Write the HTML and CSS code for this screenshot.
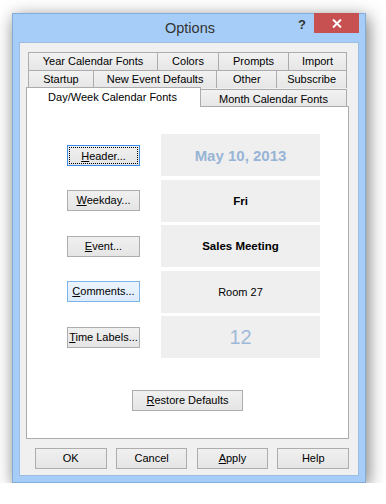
FILE: index.html
```html
<!DOCTYPE html>
<html>
<head>
<meta charset="utf-8">
<link rel="stylesheet" href="styles.css">
</head>
<body>
<div class="window">
  <div class="titlebar">
    <div class="title">Options</div>
    <div class="help">?</div>
    <div class="close"><svg width="10" height="9" viewBox="0 0 10 9"><path d="M1 0.5 L9 8.5 M9 0.5 L1 8.5" stroke="#fff" stroke-width="2"/></svg></div>
  </div>
  <div class="client">
    <div class="tabs">
      <div class="row r1">
        <div class="tab w129">Year Calendar Fonts</div>
        <div class="tab w61">Colors</div>
        <div class="tab w70">Prompts</div>
        <div class="tab w59">Import</div>
      </div>
      <div class="row r2">
        <div class="tab w65">Startup</div>
        <div class="tab w124">New Event Defaults</div>
        <div class="tab w60">Other</div>
        <div class="tab w70">Subscribe</div>
      </div>
      <div class="row r3">
        <div class="tab active">Day/Week Calendar Fonts</div>
        <div class="tab month">Month Calendar Fonts</div>
      </div>
    </div>
    <div class="panel">
      <div class="grid">
        <div class="btn focus"><span class="focusring"><u>H</u>eader...</span></div>
        <div class="box date">May 10, 2013</div>
        <div class="btn"><u>W</u>eekday...</div>
        <div class="box bold">Fri</div>
        <div class="btn"><u>E</u>vent...</div>
        <div class="box bold">Sales Meeting</div>
        <div class="btn hover"><u>C</u>omments...</div>
        <div class="box">Room 27</div>
        <div class="btn"><u>T</u>ime Labels...</div>
        <div class="box num">12</div>
      </div>
      <div class="restore-wrap"><div class="btn restore"><u>R</u>estore Defaults</div></div>
    </div>
    <div class="footer">
      <div class="btn fbtn">OK</div>
      <div class="btn fbtn">Cancel</div>
      <div class="btn fbtn"><u>A</u>pply</div>
      <div class="btn fbtn">Help</div>
    </div>
  </div>
</div>
</body>
</html>
```
FILE: styles.css
```css
html, body {
  margin: 0;
  padding: 0;
  background: #ffffff;
}
body {
  font-family: "Liberation Sans", Arial, sans-serif;
  font-size: 11px;
  color: #000;
}
.window {
  margin: 13px 0 0 12px;
  width: 352px;
  height: 468px;
  border: 1px solid #83acd9;
  background: #a6cdf7;
  box-shadow: 2px 4px 16px rgba(0,0,0,0.55);
  display: flex;
  flex-direction: column;
}
.titlebar {
  height: 28px;
  display: flex;
  align-items: flex-start;
  position: relative;
}
.title {
  flex: 1;
  text-align: center;
  font-size: 14.5px;
  line-height: 28px;
  color: #333;
  padding-left: 2px;
}
.help {
  position: absolute;
  left: 285px;
  top: 3px;
  font-weight: bold;
  font-size: 13px;
  color: #333;
}
.close {
  position: absolute;
  right: 6px;
  top: -1px;
  width: 45px;
  height: 20px;
  background: #c75050;
  display: flex;
  align-items: center;
  justify-content: center;
}
.client {
  margin: 0 6px 6px 6px;
  flex: 1;
  background: #f0f0f0;
  border: 1px solid #9cbde2;
  padding: 9px 9px 0 6px;
  display: flex;
  flex-direction: column;
}
.tabs {
  width: 323px;
}
.row {
  display: flex;
  height: 18px;
  margin: 0 2px;
}
.r3 {
  margin: 0;
  align-items: flex-end;
}
.tab {
  box-sizing: border-box;
  height: 18px;
  border: 1px solid #acacac;
  border-bottom: none;
  background: linear-gradient(#f2f2f2, #e6e6e6);
  text-align: center;
  line-height: 17px;
  white-space: nowrap;
  margin-right: -1px;
}
.tab:last-child { margin-right: 0; }
.w129 { width: 130px; }
.w61 { width: 62px; }
.w70 { width: 71px; }
.w59 { width: 59px; }
.w65 { width: 66px; }
.w124 { width: 125px; }
.w60 { width: 61px; }
.tab.active {
  width: 175px;
  height: 20px;
  margin-bottom: -1px;
  background: #fff;
  position: relative;
  z-index: 1;
  line-height: 18px;
  padding-right: 2px;
}
.tab.month {
  width: 147px;
  height: 17px;
  margin-left: 0;
  line-height: 18px;
}
.panel {
  box-sizing: border-box;
  width: 323px;
  height: 333px;
  background: #fff;
  border: 1px solid #acacac;
  padding-top: 27px;
}
.grid {
  display: grid;
  grid-template-columns: 73px 159px;
  grid-auto-rows: 42px;
  column-gap: 21px;
  row-gap: 3.5px;
  padding-left: 40px;
  align-items: center;
}
.btn {
  box-sizing: border-box;
  height: 21px;
  border: 1px solid #adadad;
  background: linear-gradient(#f0f0f0, #e5e5e5);
  text-align: center;
  line-height: 19px;
  white-space: nowrap;
  color: #000;
}
.btn.focus {
  border-color: #3c8ce6;
  padding: 1px;
  line-height: 17px;
}
.focusring {
  display: block;
  height: 15px;
  border: 1px dotted #000;
}
.btn.hover {
  border-color: #7eb4ea;
  background: linear-gradient(#ecf4fc, #dcecfc);
}
.box {
  height: 42px;
  background: #efefef;
  display: flex;
  align-items: center;
  justify-content: center;
  font-size: 11px;
}
.box.bold {
  font-weight: bold;
  font-size: 11.5px;
}
.box.date {
  font-weight: bold;
  font-size: 15px;
  color: #98b4d6;
}
.box.num {
  font-size: 20px;
  color: #9fbad9;
}
.restore-wrap {
  display: flex;
  justify-content: center;
  margin-top: 32px;
}
.restore {
  width: 111px;
}
.footer {
  display: flex;
  gap: 9.33px;
  padding: 9px 0 0 9px;
}
.fbtn {
  width: 72px;
  height: 21px;
}
```
